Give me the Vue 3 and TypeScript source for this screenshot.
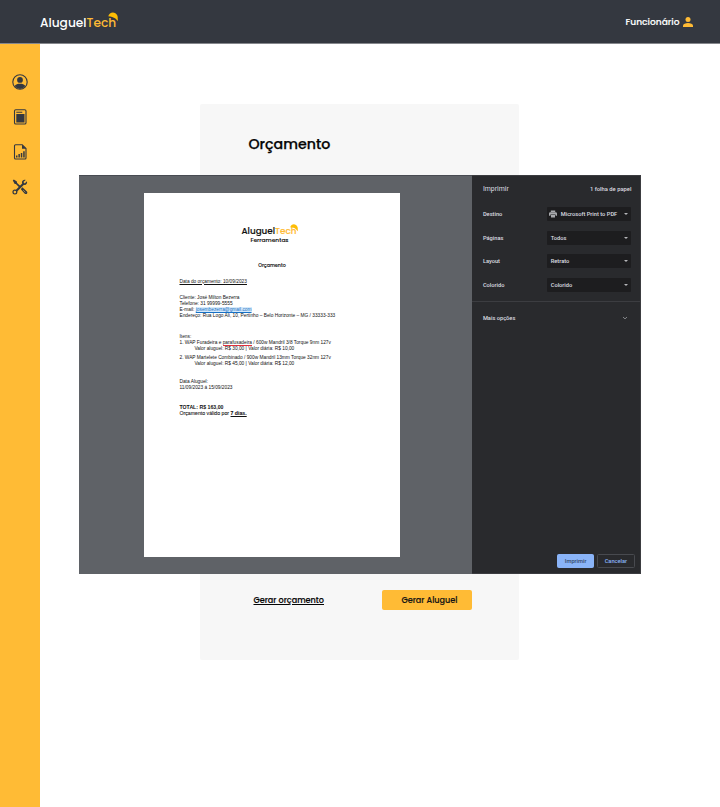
<script setup lang="ts">
interface Option {
  label: string
  value: string
  printer?: boolean
}

interface Item {
  before: string
  flagged?: string
  after: string
  price: string
}

const options: Option[] = [
  { label: 'Destino', value: 'Microsoft Print to PDF', printer: true },
  { label: 'Páginas', value: 'Todos' },
  { label: 'Layout', value: 'Retrato' },
  { label: 'Colorido', value: 'Colorido' },
]

const items: Item[] = [
  {
    before: '1. WAP Furadeira e ',
    flagged: 'parafusadeira',
    after: ' / 600w Mandril 3/8 Torque 9nm 127v',
    price: 'Valor aluguel: R$ 30,00 | Valor diária: R$ 10,00',
  },
  {
    before: '2. WAP Martelete Combinado / 900w Mandril 13mm Torque 32nm 127v',
    after: '',
    price: 'Valor aluguel: R$ 45,00 | Valor diária: R$ 12,00',
  },
]
</script>

<template>
  <div class="screen">
    <header class="topbar">
      <div class="logo">
        <span>Aluguel</span><span class="accent">Tech</span>
        <svg class="helmet" viewBox="0 0 10 10">
          <path d="M.3 4.200C1 .8 4.800-.5 7.400 1.200c2 1.300 2.500 3.400 2.300 5.200l.3 2.600-2.600-2.400C5.600 5 3 4.600.3 4.200Z" />
        </svg>
      </div>
      <div class="user">
        <span>Funcionário</span>
        <svg viewBox="0 0 10 10">
          <circle cx="5" cy="2.500" r="2.500" />
          <path d="M0 10V8.600C0 6.700 2.500 5.900 5 5.900s5 .8 5 2.700V10Z" />
        </svg>
      </div>
    </header>

    <div class="body">
      <nav class="sidebar">
        <svg viewBox="0 0 16 16">
          <circle cx="8" cy="8" r="7.200" fill="none" stroke="#343840" stroke-width="1.100" />
          <circle cx="8" cy="5.900" r="2.900" />
          <path d="M2.600 12.100C3.700 10.300 5.700 9.700 8 9.700s4.300.6 5.400 2.400A7 7 0 0 1 8 15a7 7 0 0 1-5.400-2.900Z" />
        </svg>
        <svg viewBox="0 0 16 16">
          <rect x="2.500" y=".8" width="11.500" height="14.200" rx="1.300" fill="none" stroke="#343840" stroke-width="1.100" />
          <path d="M4.300 2.800h6v1h-6zM4.300 5h8.200v8.400H4.300z" />
        </svg>
        <svg viewBox="0 0 16 16">
          <path d="M3.500.8h6.700L14 4.600V14a1 1 0 0 1-1 1H3.500a1 1 0 0 1-1-1V1.800a1 1 0 0 1 1-1Z" fill="none" stroke="#343840" stroke-width="1.100" />
          <path d="M10 .8v4h4ZM4 11.500h1.500v2H4zM6.400 10h1.500v3.500H6.400zM8.800 9h1.500v4.500H8.800zM11.200 7.200h1.500v6.300h-1.500z" />
        </svg>
        <svg viewBox="0 0 16 16">
          <path d="m.8 1.600 1-1 3.100 2 .2 1.300L8.600 7.300 7.300 8.600 3.900 5.100l-1.200-.2ZM9.400 9.300l1-1 4.500 4.300c1.300 1.500-.7 3.300-2.100 2.100L9 10.600Z" />
          <path d="m3.200 12.900 8.500-8.500" fill="none" stroke="#343840" stroke-width="2.100" />
          <path d="m14.900 2.200-2.200 2.200-1.300-1.300L13.700.9C11.800.1 9.500 1.700 10 4l1.700 1.800c2.300.6 4.100-1.500 3.200-3.600Z" />
          <circle cx="2.900" cy="13.100" r="1.900" fill="#ffbb35" stroke="#343840" stroke-width="1.200" />
          <path d="m11.200 11.200 2.200 2.200" fill="none" stroke="#ffbb35" stroke-width=".6" />
        </svg>
      </nav>

      <main class="content">
        <section class="card">
          <h1>Orçamento</h1>
          <div class="actions">
            <a class="link">Gerar orçamento</a>
            <button class="primary">Gerar Aluguel</button>
          </div>
        </section>
      </main>
    </div>

    <div class="dialog">
      <div class="preview">
        <article class="page">
          <div class="logo doc-logo">
            <span>Aluguel</span><span class="accent">Tech</span>
            <svg class="helmet" viewBox="0 0 10 10">
              <path d="M.3 4.200C1 .8 4.800-.5 7.400 1.200c2 1.300 2.500 3.400 2.300 5.200l.3 2.600-2.600-2.400C5.600 5 3 4.600.3 4.200Z" />
            </svg>
          </div>
          <div class="subtitle">Ferramentas</div>
          <h2>Orçamento</h2>
          <p class="date"><u>Data do orçamento: 10/09/2023</u></p>
          <div class="client">
            <p>Cliente: José Milton Bezerra</p>
            <p>Telefone: 31 99999-5555</p>
            <p>E-mail: <span class="mail">josembezerra@gmail.com</span></p>
            <p>Endereço: Rua Logo Ali, 10, Pertinho – Belo Horizonte – MG / 33333-333</p>
          </div>
          <div class="items">
            <p class="items-title">Itens:</p>
            <div v-for="item in items" :key="item.before" class="item">
              <p>{{ item.before }}<span v-if="item.flagged" class="flagged">{{ item.flagged }}</span>{{ item.after }}</p>
              <p class="price">{{ item.price }}</p>
            </div>
          </div>
          <div class="period">
            <p>Data Aluguel:</p>
            <p>11/09/2023 á 15/09/2023</p>
          </div>
          <div class="total">
            <p><b>TOTAL: R$ 163,00</b></p>
            <p class="valid">Orçamento válido por <b><u>7 dias.</u></b></p>
          </div>
        </article>
      </div>

      <aside class="settings">
        <div class="settings-head">
          <span class="heading">Imprimir</span>
          <span class="sheets">1 folha de papel</span>
        </div>
        <div v-for="option in options" :key="option.label" class="row">
          <span>{{ option.label }}</span>
          <div class="select">
            <svg v-if="option.printer" class="printer" viewBox="0 0 8 8">
              <path d="M1.800.4h4.400v1.500H1.800zM1.300 2.300h5.400Q8 2.300 8 3.500v2.300H6.600V4.500H1.400v1.300H0V3.500q0-1.200 1.300-1.200ZM2 5h4v2.500H2Z" />
            </svg>
            <span>{{ option.value }}</span>
            <i class="caret"></i>
          </div>
        </div>
        <div class="more">
          <span>Mais opções</span>
          <svg viewBox="0 0 6 4"><path d="m1 1 2 1.900L5 1" /></svg>
        </div>
        <footer class="buttons">
          <button class="print">Imprimir</button>
          <button class="cancel">Cancelar</button>
        </footer>
      </aside>
    </div>
  </div>
</template>

<style>
body {
  margin: 0;
  background: #fff;
}
</style>

<style scoped>
.screen {
  position: relative;
  display: flex;
  flex-direction: column;
  width: 720px;
  height: 807px;
  overflow: hidden;
  background: #fff;
  color: #050505;
  font-family: Poppins, Inter, sans-serif;
}
h1, h2, p {
  margin: 0;
}
button {
  border: 0;
  padding: 0;
  font-family: inherit;
}
.topbar {
  box-sizing: border-box;
  display: flex;
  flex: none;
  align-items: center;
  justify-content: space-between;
  height: 44px;
  padding: 0 27px 0 40px;
  border-bottom: 1px solid #85878c;
  background: #343840;
  color: #fff;
}
.logo {
  position: relative;
  width: max-content;
  font-size: 12.200px;
  font-weight: 500;
  line-height: 16px;
  white-space: nowrap;
}
.topbar .logo {
  margin-top: 3px;
}
.accent {
  color: #ffbb35;
}
.helmet {
  position: absolute;
  top: -3px;
  right: -2px;
  width: 10px;
  height: 10px;
  fill: #fdbd05;
}
.user {
  display: flex;
  align-items: center;
  gap: 3.500px;
  font-size: 9.100px;
  font-weight: 500;
  -webkit-text-stroke: 0.150px #fff;
}
.user svg {
  width: 10px;
  height: 10px;
  fill: #ffbb35;
}
.body {
  display: flex;
  flex: 1;
}
.sidebar {
  box-sizing: border-box;
  display: flex;
  flex-direction: column;
  align-items: center;
  gap: 19px;
  width: 40px;
  padding-top: 30px;
  background: #ffbb35;
}
.sidebar svg {
  width: 16px;
  height: 16px;
  fill: #343840;
}
.content {
  flex: 1;
  padding: 59.700px 0 0 160px;
}
.card {
  box-sizing: border-box;
  display: flex;
  flex-direction: column;
  justify-content: space-between;
  width: 319.400px;
  height: 556.300px;
  padding: 29.500px 47.400px 49.500px 48.500px;
  border-radius: 2px;
  background: #f7f7f7;
}
h1 {
  font-size: 14.200px;
  font-weight: 500;
  line-height: 22px;
  -webkit-text-stroke: 0.250px #050505;
}
.actions {
  display: flex;
  align-items: center;
  justify-content: space-between;
  padding-left: 5px;
  font-size: 8.100px;
  font-weight: 500;
  -webkit-text-stroke: 0.150px #050505;
}
.link {
  text-decoration: underline;
}
.primary {
  width: 90px;
  height: 20px;
  padding-left: 5px;
  border-radius: 2px;
  background: #ffbb35;
  color: #141414;
  font-size: 8.100px;
  font-weight: 500;
  -webkit-text-stroke: 0.150px #141414;
}
.dialog {
  position: absolute;
  top: 175px;
  left: 78.600px;
  display: flex;
  width: 562.800px;
  height: 399.400px;
  background: #5f6266;
}
.preview {
  box-sizing: border-box;
  width: 393.800px;
  padding: 16.500px 0 0 65.400px;
  border-top: 1px solid #484b52;
  background: #5f6267;
}
.page {
  box-sizing: border-box;
  width: 256px;
  height: 364.400px;
  padding: 31.500px 35.500px 0;
  background: #fff;
  color: #111;
  font-family: "Liberation Sans", sans-serif;
  font-size: 4.800px;
  line-height: 6px;
  white-space: nowrap;
}
.doc-logo {
  margin-left: 62px;
  font-family: Poppins, Inter, sans-serif;
  font-size: 8.800px;
  font-weight: 500;
  line-height: 14px;
  -webkit-text-stroke: 0.150px;
}
.doc-logo .helmet {
  top: 0;
  right: -2px;
  width: 8px;
  height: 8px;
}
.subtitle {
  padding-right: 5px;
  font-family: Poppins, Inter, sans-serif;
  font-size: 5.900px;
  font-weight: 500;
  line-height: 6px;
  text-align: center;
  margin-top: -1px;
  -webkit-text-stroke: 0.120px;
}
h2 {
  margin-top: 19.500px;
  font-family: Poppins, Inter, sans-serif;
  font-size: 4.800px;
  font-weight: 500;
  line-height: 6px;
  text-align: center;
  -webkit-text-stroke: 0.100px;
}
.date {
  margin-top: 10px;
}
.client {
  margin-top: 10px;
}
.mail {
  background: #d6eafb;
  color: #1670c4;
  text-decoration: underline;
}
.items {
  margin-top: 15.500px;
}
.items-title {
  line-height: 5.500px;
}
.item + .item {
  margin-top: 3px;
}
.flagged {
  border-bottom: 1px solid #e0303c;
}
.price {
  padding-left: 15px;
}
.period {
  margin-top: 12px;
}
.total {
  margin-top: 13px;
  font-size: 5.200px;
}
.valid {
  -webkit-text-stroke: 0.080px #111;
}
.settings {
  box-sizing: border-box;
  display: flex;
  flex: 1;
  flex-direction: column;
  border: solid #3b3c40;
  border-width: 1px 1px 1px 0;
  background: #292a2d;
  color: #dcdde0;
  font-family: Roboto, sans-serif;
  font-size: 5.700px;
  font-weight: 500;
}
.settings-head {
  display: flex;
  align-items: center;
  justify-content: space-between;
  height: 26px;
  padding: 0 9px 0 10.500px;
}
.heading {
  font-size: 6.900px;
  font-weight: 400;
}
.sheets {
  font-size: 5.800px;
}
.row {
  display: flex;
  align-items: center;
  justify-content: space-between;
  height: 23.800px;
  padding: 0 9px 0 10.500px;
}
.select {
  box-sizing: border-box;
  display: flex;
  align-items: center;
  gap: 4px;
  width: 84.700px;
  height: 14px;
  padding: 0 3px 0 4px;
  border-radius: 1px;
  background: #1d1d1f;
}
.printer {
  width: 8px;
  height: 8px;
  margin-left: -2px;
  fill: #a9abae;
}
.caret {
  margin-left: auto;
  border: solid transparent;
  border-width: 2.500px 2.500px 0;
  border-top-color: #b5b6b9;
}
.more {
  display: flex;
  align-items: center;
  justify-content: space-between;
  height: 31px;
  margin-top: 4px;
  padding: 0 12px 0 10.500px;
  border-top: 1px solid #3c3d41;
}
.more svg {
  width: 6px;
  height: 4px;
  fill: none;
  stroke: #9b9da1;
  stroke-width: 0.800;
}
.buttons {
  display: flex;
  justify-content: flex-end;
  gap: 3px;
  margin-top: auto;
  padding: 0 5.500px 5.500px 0;
}
.buttons button {
  box-sizing: border-box;
  height: 14px;
  border: 1px solid #484a4f;
  border-radius: 1.500px;
  background: none;
  font-size: 5.700px;
  font-weight: 500;
}
.buttons .print {
  width: 36.500px;
  border-color: #8ab4f8;
  background: #8ab4f8;
  color: #35486a;
}
.buttons .cancel {
  width: 38px;
  color: #8ab4f8;
}
</style>
